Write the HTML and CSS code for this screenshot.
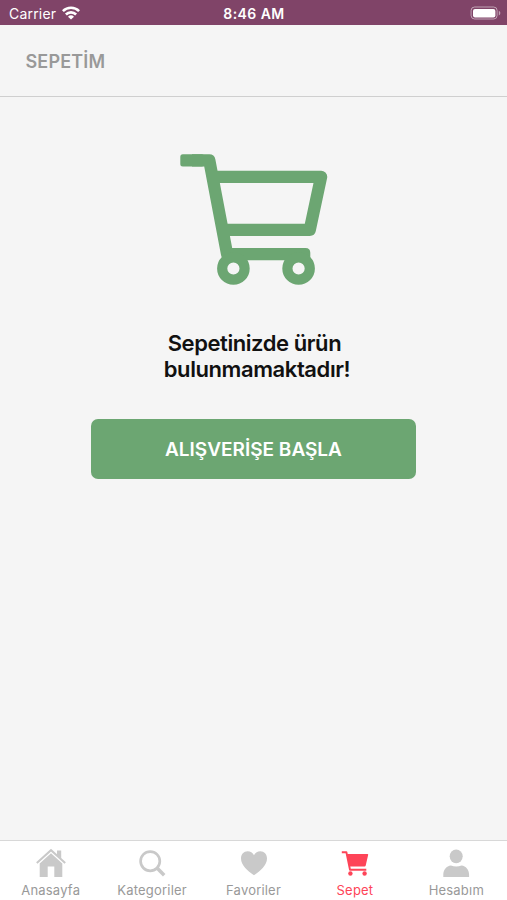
FILE: index.html
```html
<!DOCTYPE html>
<html lang="tr">
<head>
  <meta charset="utf-8">
  <meta name="viewport" content="width=device-width, initial-scale=1">
  <title>Sepetim</title>
  <link rel="stylesheet" href="styles.css">
</head>
<body>

  <div class="status">
    <div class="status_left">
      <span class="carrier">Carrier</span>
      <svg class="wifi" width="18" height="14" viewBox="0 0 18 14">
        <g fill="none" stroke="#fff" stroke-width="2.6">
          <path d="M.9 5.1a11.4 11.4 0 0 1 16.2 0"/>
          <path d="M3.9 8.5a7.2 7.2 0 0 1 10.2 0"/>
        </g>
        <path d="M9 13.6L6 10.7a4.3 4.3 0 0 1 6 0z" fill="#fff"/>
      </svg>
    </div>
    <span class="clock">8:46 AM</span>
    <div class="status_right">
      <svg width="31" height="14" viewBox="0 0 31 14">
        <rect x="1.1" y="1" width="26" height="12" rx="3.5" fill="none" stroke="#fff" stroke-opacity=".5"/>
        <rect x="3" y="3" width="22.4" height="8.4" rx="2" fill="#fff"/>
        <path d="M28.8 4.8c2 .8 2 3.8 0 4.6z" fill="#fff" fill-opacity=".5"/>
      </svg>
    </div>
  </div>

  <header class="header">
    <h1>SEPETİM</h1>
  </header>

  <main class="empty">
    <svg class="cart" width="148" height="132" viewBox="0 0 148 132">
      <rect x=".3" y=".2" width="24" height="12.2" rx="2.5" fill="#6ca672"/>
      <g fill="none" stroke="#6ca672" stroke-width="12.3" stroke-linejoin="round">
        <path d="M12 6.3h17.3l17.8 93.9h77"/>
        <path d="M33 22.8h108.1l-11.3 53H42"/>
      </g>
      <path d="M123 94h2.5q4.8 0 4.8 5v7H123z" fill="#6ca672"/>
      <g fill="#f5f5f5" stroke="#6ca672" stroke-width="10.2">
        <circle cx="53.4" cy="114.5" r="11.2"/>
        <circle cx="118.6" cy="114.5" r="11.2"/>
      </g>
    </svg>
    <p class="message">Sepetinizde ürün&nbsp;<br>bulunmamaktadır!</p>
    <button class="start">ALIŞVERİŞE BAŞLA</button>
  </main>

  <nav class="tabs">
    <a class="tab">
      <svg width="32" height="30" viewBox="0 0 32 30">
        <path d="M1.8 15L16 2.2 30.2 15" fill="none" stroke="#c9c9c9" stroke-width="2"/>
        <path d="M22 2.5h4.2v8.2L22 7zM16 5.2L27.3 15.4V29h-8V18.5h-6.6V29h-8V15.4z" fill="#c9c9c9"/>
      </svg>
      <span>Anasayfa</span>
    </a>
    <a class="tab">
      <svg width="32" height="30" viewBox="0 0 32 30">
        <g fill="none" stroke="#c9c9c9">
          <circle cx="14.2" cy="13.2" r="9.6" stroke-width="2.7"/>
          <path d="M20.8 19.8l7.4 7.4" stroke-width="3.5"/>
        </g>
      </svg>
      <span>Kategoriler</span>
    </a>
    <a class="tab">
      <svg width="32" height="30" viewBox="0 0 32 30">
        <path d="M16 27.2C9.5 22.6 3 17 3 10.4 3 6.3 5.8 3.3 9.6 3.3c2.8 0 5.1 1.5 6.4 3.9 1.3-2.4 3.6-3.9 6.4-3.9 3.8 0 6.6 3 6.6 7.1C29 17 22.5 22.6 16 27.2z" fill="#c9c9c9"/>
      </svg>
      <span>Favoriler</span>
    </a>
    <a class="tab tab-active">
      <svg width="32" height="30" viewBox="0 0 32 30">
        <path d="M2.8 4.2h4.6L11 21.7h16.3" fill="none" stroke="#fe4458" stroke-width="1.9" stroke-linejoin="round"/>
        <path d="M8 6h20.5q.8 0 .7.8l-2.5 10.7q-.2.9-1.1.9H10.3z" fill="#fe4458"/>
        <circle cx="11.4" cy="25.5" r="2.2" fill="#fe4458"/>
        <circle cx="25.6" cy="25.5" r="2.2" fill="#fe4458"/>
      </svg>
      <span>Sepet</span>
    </a>
    <a class="tab">
      <svg width="32" height="30" viewBox="0 0 32 30">
        <ellipse cx="16.2" cy="8.3" rx="6.5" ry="6.9" fill="#c9c9c9"/>
        <path d="M3.3 29v-2.2c0-5.2 3.2-8.8 7.6-9.4 3.4 1.4 7.2 1.4 10.600 0 4.400.6 7.600 4.200 7.600 9.400V29z" fill="#c9c9c9"/>
      </svg>
      <span>Hesabım</span>
    </a>
  </nav>

</body>
</html>
```
FILE: styles.css
```css
* {
  box-sizing: border-box;
}

body {
  margin: 0;
  height: 100vh;
  display: flex;
  flex-direction: column;
  background: #f5f5f5;
  font-family: Inter, "Liberation Sans", sans-serif;
}

.status {
  height: 25px;
  padding: 1px 6px 0 9px;
  display: grid;
  grid-template-columns: 1fr auto 1fr;
  align-items: center;
  background: #804468;
  color: #fff;
  font-size: 14px;
}
.status_left {
  display: flex;
  align-items: center;
  gap: 6px;
}
.carrier {
  letter-spacing: .2px;
}
.clock {
  padding-right: 2px;
  font-size: 14px;
  font-weight: 600;
  letter-spacing: .45px;
}
.status_right {
  display: flex;
  justify-content: flex-end;
}

.header {
  height: 72px;
  padding: 2px 25.5px 0;
  display: flex;
  align-items: center;
  border-bottom: 1px solid #cfcfcf;
}
.header h1 {
  margin: 0;
  font-size: 18px;
  font-weight: 600;
  letter-spacing: .15px;
  color: #999;
}

.empty {
  flex: 1;
  display: flex;
  flex-direction: column;
  align-items: center;
  padding-top: 57px;
}
.message {
  margin: 44px 0 0 7px;
  font-size: 22px;
  font-weight: 600;
  letter-spacing: -.42px;
  line-height: 26px;
  text-align: center;
  color: #111;
}
.start {
  width: 325px;
  height: 60px;
  margin-top: 37px;
  padding: 0;
  border: 0;
  border-radius: 7px;
  background: #6ca672;
  color: #fff;
  font-family: inherit;
  font-size: 19px;
  font-weight: 600;
}

.tabs {
  height: 60px;
  display: flex;
  background: #fff;
  border-top: 1px solid #d8d8d8;
}
.tab {
  flex: 1;
  display: flex;
  flex-direction: column;
  align-items: center;
  padding-top: 7px;
  font-size: 13px;
  line-height: 16px;
  letter-spacing: .2px;
  color: #999;
}
.tab span {
  margin-top: 4px;
}
.tab-active {
  color: #fe4458;
}
```
